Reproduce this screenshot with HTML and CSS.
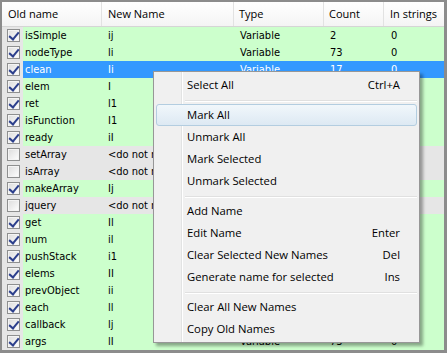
FILE: index.html
```html
<!DOCTYPE html>
<html lang="en">
<head>
    <meta charset="UTF-8">
    <title>Rename</title>
    <link rel="stylesheet" href="styles.css">
</head>
<body>
    <div class="frame">
        <div class="head">
            <div class="c1">Old name</div>
            <div class="c2">New Name</div>
            <div class="c3">Type</div>
            <div class="c4">Count</div>
            <div class="c5">In strings</div>
        </div>
        <div class="rows">
            <div class="row on"><span class="chk"><i class="box checked"></i></span><span class="name">isSimple</span><span class="new">ij</span><span class="type">Variable</span><span class="count">2</span><span class="str">0</span></div>
            <div class="row on"><span class="chk"><i class="box checked"></i></span><span class="name">nodeType</span><span class="new">li</span><span class="type">Variable</span><span class="count">73</span><span class="str">0</span></div>
            <div class="row on sel"><span class="chk"><i class="box checked"></i></span><span class="name">clean</span><span class="new">Ii</span><span class="type">Variable</span><span class="count">17</span><span class="str">0</span></div>
            <div class="row on"><span class="chk"><i class="box checked"></i></span><span class="name">elem</span><span class="new">I</span><span class="type"></span><span class="count"></span><span class="str"></span></div>
            <div class="row on"><span class="chk"><i class="box checked"></i></span><span class="name">ret</span><span class="new">l1</span><span class="type"></span><span class="count"></span><span class="str"></span></div>
            <div class="row on"><span class="chk"><i class="box checked"></i></span><span class="name">isFunction</span><span class="new">I1</span><span class="type"></span><span class="count"></span><span class="str"></span></div>
            <div class="row on"><span class="chk"><i class="box checked"></i></span><span class="name">ready</span><span class="new">iI</span><span class="type"></span><span class="count"></span><span class="str"></span></div>
            <div class="row"><span class="chk"><i class="box"></i></span><span class="name">setArray</span><span class="new">&lt;do not r</span><span class="type"></span><span class="count"></span><span class="str"></span></div>
            <div class="row"><span class="chk"><i class="box"></i></span><span class="name">isArray</span><span class="new">&lt;do not r</span><span class="type"></span><span class="count"></span><span class="str"></span></div>
            <div class="row on"><span class="chk"><i class="box checked"></i></span><span class="name">makeArray</span><span class="new">Ij</span><span class="type"></span><span class="count"></span><span class="str"></span></div>
            <div class="row"><span class="chk"><i class="box"></i></span><span class="name">jquery</span><span class="new">&lt;do not r</span><span class="type"></span><span class="count"></span><span class="str"></span></div>
            <div class="row on"><span class="chk"><i class="box checked"></i></span><span class="name">get</span><span class="new">Il</span><span class="type"></span><span class="count"></span><span class="str"></span></div>
            <div class="row on"><span class="chk"><i class="box checked"></i></span><span class="name">num</span><span class="new">il</span><span class="type"></span><span class="count"></span><span class="str"></span></div>
            <div class="row on"><span class="chk"><i class="box checked"></i></span><span class="name">pushStack</span><span class="new">i1</span><span class="type"></span><span class="count"></span><span class="str"></span></div>
            <div class="row on"><span class="chk"><i class="box checked"></i></span><span class="name">elems</span><span class="new">II</span><span class="type"></span><span class="count"></span><span class="str"></span></div>
            <div class="row on"><span class="chk"><i class="box checked"></i></span><span class="name">prevObject</span><span class="new">ii</span><span class="type"></span><span class="count"></span><span class="str"></span></div>
            <div class="row on"><span class="chk"><i class="box checked"></i></span><span class="name">each</span><span class="new">ll</span><span class="type"></span><span class="count"></span><span class="str"></span></div>
            <div class="row on"><span class="chk"><i class="box checked"></i></span><span class="name">callback</span><span class="new">lj</span><span class="type"></span><span class="count"></span><span class="str"></span></div>
            <div class="row on"><span class="chk"><i class="box checked"></i></span><span class="name">args</span><span class="new">lI</span><span class="type">Variable</span><span class="count">73</span><span class="str">0</span></div>
        </div>
    </div>

    <div class="menu">
        <div class="item"><span>Select All</span><span>Ctrl+A</span></div>
        <div class="sep"></div>
        <div class="item hover"><span>Mark All</span></div>
        <div class="item"><span>Unmark All</span></div>
        <div class="item"><span>Mark Selected</span></div>
        <div class="item"><span>Unmark Selected</span></div>
        <div class="sep"></div>
        <div class="item"><span>Add Name</span></div>
        <div class="item"><span>Edit Name</span><span>Enter</span></div>
        <div class="item"><span>Clear Selected New Names</span><span>Del</span></div>
        <div class="item"><span>Generate name for selected</span><span>Ins</span></div>
        <div class="sep"></div>
        <div class="item"><span>Clear All New Names</span></div>
        <div class="item"><span>Copy Old Names</span></div>
    </div>
</body>
</html>
```

FILE: styles.css
```css
*{
    padding: 0;
    margin: 0;
    box-sizing: border-box;
}
body{
    width: 447px;
    height: 353px;
    overflow: hidden;
    position: relative;
    background: #f0f0f0;
    font-family: "DejaVu Sans Condensed", "DejaVu Sans", sans-serif;
    font-size: 11px;
    color: #000;
}
.frame{
    height: 353px;
    border: 2px solid #8c8c8c;
    border-right-width: 3px;
    border-bottom-width: 3px;
    background: #fff;
    display: flex;
    flex-direction: column;
}
.head{
    display: flex;
    height: 25px;
    border-bottom: 1px solid #d5d5d5;
    background: linear-gradient(#ffffff, #f4f4f4);
    font-family: "Open Sans", sans-serif;
    font-size: 11px;
}
.head div{
    line-height: 23px;
    padding-left: 6px;
    border-right: 1px solid #e2e2e2;
}
.c1{ width: 100px; }
.c2{ width: 132px; }
.c3{ width: 90px; padding-left: 5px !important; }
.c4{ width: 60px; padding-left: 5px !important; }
.c5{ width: 60px; border-right: none !important; }

.rows{
    flex: 1;
    background: #e6e6e6;
}
.row{
    display: flex;
    height: 17px;
    line-height: 17px;
    background: #e6e6e6;
    white-space: nowrap;
}
.row span{
    display: block;
    overflow: hidden;
}
.chk{
    width: 21px;
    padding: 2px 0 0 5px;
}
.name{ width: 79px; padding-left: 2px; }
.new{ width: 132px; padding-left: 6px; }
.type{ width: 90px; padding-left: 6px; }
.count{ width: 60px; padding-left: 6px; }
.str{ width: 60px; padding-left: 7px; }

.row.on .name,
.row.on .new,
.row.on .type,
.row.on .count,
.row.on .str{
    background: #ccffcc;
}
.row.sel .name,
.row.sel .new,
.row.sel .type,
.row.sel .count,
.row.sel .str{
    background: #3399ff;
    color: #fff;
}

.box{
    display: block;
    position: relative;
    width: 13px;
    height: 13px;
    border: 1px solid #8e8f8f;
    background: linear-gradient(135deg, #dcdcdc, #ffffff);
    box-shadow: inset 0 0 0 1px #f4f4f4;
}
.box.checked::after{
    content: "";
    position: absolute;
    left: 3px;
    top: 0;
    width: 4px;
    height: 8px;
    border-right: 2px solid #2c3f8c;
    border-bottom: 2px solid #2c3f8c;
    transform: rotate(40deg);
}

.menu{
    position: absolute;
    left: 153px;
    top: 71px;
    width: 267px;
    padding: 2px;
    border: 1px solid #979797;
    background: linear-gradient(90deg, transparent 27px, #e2e3e3 27px, #e2e3e3 28px, #ffffff 28px, #ffffff 29px, transparent 29px), #f0f0f0;
    box-shadow: 3px 3px 3px rgba(0, 0, 0, 0.35);
    font-family: "Open Sans", sans-serif;
    font-size: 11.3px;
}
.item{
    display: flex;
    justify-content: space-between;
    height: 22px;
    line-height: 20px;
    padding: 0 16px 0 30px;
    border: 1px solid transparent;
    border-radius: 3px;
}
.item.hover{
    border-color: #b3cde0;
    background: linear-gradient(#f1f7fb, #dde9f3);
}
.sep{
    height: 8px;
    margin-left: 29px;
    background: linear-gradient(transparent 4px, #e0e0e0 4px, #e0e0e0 5px, #ffffff 5px, #ffffff 6px, transparent 6px);
}
```
